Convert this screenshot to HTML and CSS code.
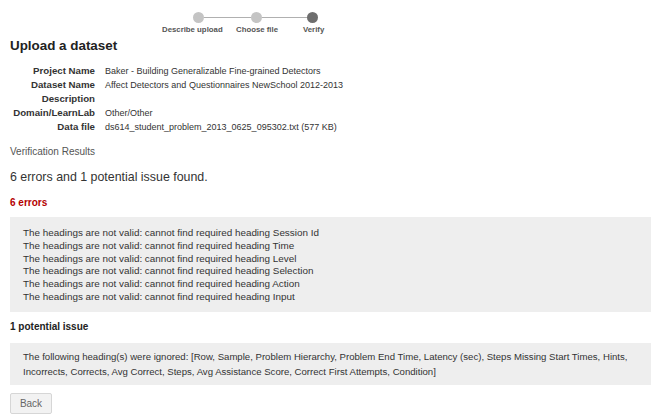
FILE: index.html
```html
<!DOCTYPE html>
<html>
<head>
<meta charset="utf-8">
<link rel="stylesheet" href="styles.css">
</head>
<body>
<div class="page">
  <div class="stepper">
    <div class="dot-row">
      <span class="dot done"></span><span class="line line-a"></span><span class="dot done"></span><span class="line line-b"></span><span class="dot current"></span>
    </div>
    <div class="label-row">
      <span class="step-label">Describe upload</span>
      <span class="step-label">Choose file</span>
      <span class="step-label">Verify</span>
    </div>
  </div>

  <h1 class="title">Upload a dataset</h1>

  <div class="meta">
    <div class="meta-label">Project Name</div><div class="meta-value">Baker - Building Generalizable Fine-grained Detectors</div>
    <div class="meta-label">Dataset Name</div><div class="meta-value">Affect Detectors and Questionnaires NewSchool 2012-2013</div>
    <div class="meta-label">Description</div><div class="meta-value"></div>
    <div class="meta-label">Domain/LearnLab</div><div class="meta-value">Other/Other</div>
    <div class="meta-label">Data file</div><div class="meta-value">ds614_student_problem_2013_0625_095302.txt (577 KB)</div>
  </div>

  <div class="section-title">Verification Results</div>
  <div class="summary">6 errors and 1 potential issue found.</div>

  <div class="errors-title">6 errors</div>
  <div class="box box-errors">
    <div>The headings are not valid: cannot find required heading Session Id</div>
    <div>The headings are not valid: cannot find required heading Time</div>
    <div>The headings are not valid: cannot find required heading Level</div>
    <div>The headings are not valid: cannot find required heading Selection</div>
    <div>The headings are not valid: cannot find required heading Action</div>
    <div>The headings are not valid: cannot find required heading Input</div>
  </div>

  <div class="issues-title">1 potential issue</div>
  <div class="box box-issues">
    The following heading(s) were ignored: [Row, Sample, Problem Hierarchy, Problem End Time, Latency (sec), Steps Missing Start Times, Hints, Incorrects, Corrects, Avg Correct, Steps, Avg Assistance Score, Correct First Attempts, Condition]
  </div>

  <button class="btn-back" type="button">Back</button>
</div>
</body>
</html>
```

FILE: styles.css
```css
* { box-sizing: border-box; }
html, body { margin: 0; padding: 0; background: #fff; }
body {
  font-family: "Liberation Sans", Arial, sans-serif;
  color: #333;
  font-size: 10px;
}
.page {
  padding: 0 8px 0 10px;
}
.stepper {
  padding-top: 12px;
}
.dot-row {
  display: flex;
  align-items: center;
  height: 11px;
  margin-left: 183px;
}
.dot {
  width: 11px;
  height: 11px;
  border-radius: 50%;
  flex: none;
}
.dot.done { background: #c4c4c4; }
.dot.current { background: #6e6e6e; }
.line {
  height: 1px;
  background: #b0b0b0;
  flex: none;
}
.line-a { width: 47px; }
.line-b { width: 45px; }
.label-row {
  display: grid;
  grid-template-columns: 74px 67px auto;
  margin-left: 152px;
  margin-top: 2px;
}
.step-label {
  font-size: 7.8px;
  font-weight: bold;
  color: #555;
  line-height: 10px;
  white-space: nowrap;
}
.title {
  font-size: 13.4px;
  font-weight: bold;
  margin: 3px 0 0 0;
  line-height: 16px;
  color: #222;
}
.meta {
  display: grid;
  grid-template-columns: 85px 1fr;
  column-gap: 10px;
  margin-top: 10px;
  line-height: 14px;
}
.meta-label {
  text-align: right;
  font-weight: bold;
  font-size: 9.7px;
}
.meta-value { min-height: 14px; font-size: 9px; }
.section-title {
  margin-top: 11px;
  color: #555;
  line-height: 14px;
}
.summary {
  font-size: 12.4px;
  margin-top: 10px;
  line-height: 16px;
}
.errors-title {
  color: #b40000;
  font-weight: bold;
  margin-top: 11px;
  line-height: 14px;
}
.box {
  background: #eee;
  width: 641px;
}
.box-errors {
  margin-top: 7px;
  padding: 10px 13px 8px 13px;
  line-height: 12.8px;
  font-size: 9.9px;
}
.issues-title {
  font-weight: bold;
  margin-top: 8px;
  line-height: 14px;
  color: #222;
}
.box-issues {
  margin-top: 9px;
  padding: 6px 8px 6px 13px;
  line-height: 15px;
  font-size: 9.6px;
}
.btn-back {
  display: block;
  margin-top: 8px;
  width: 42px;
  height: 21px;
  font-family: "Liberation Sans", Arial, sans-serif;
  font-size: 10px;
  color: #666;
  background: #f2f2f2;
  border: 1px solid #d6d6d6;
  border-radius: 2px;
  padding: 0;
}
```
